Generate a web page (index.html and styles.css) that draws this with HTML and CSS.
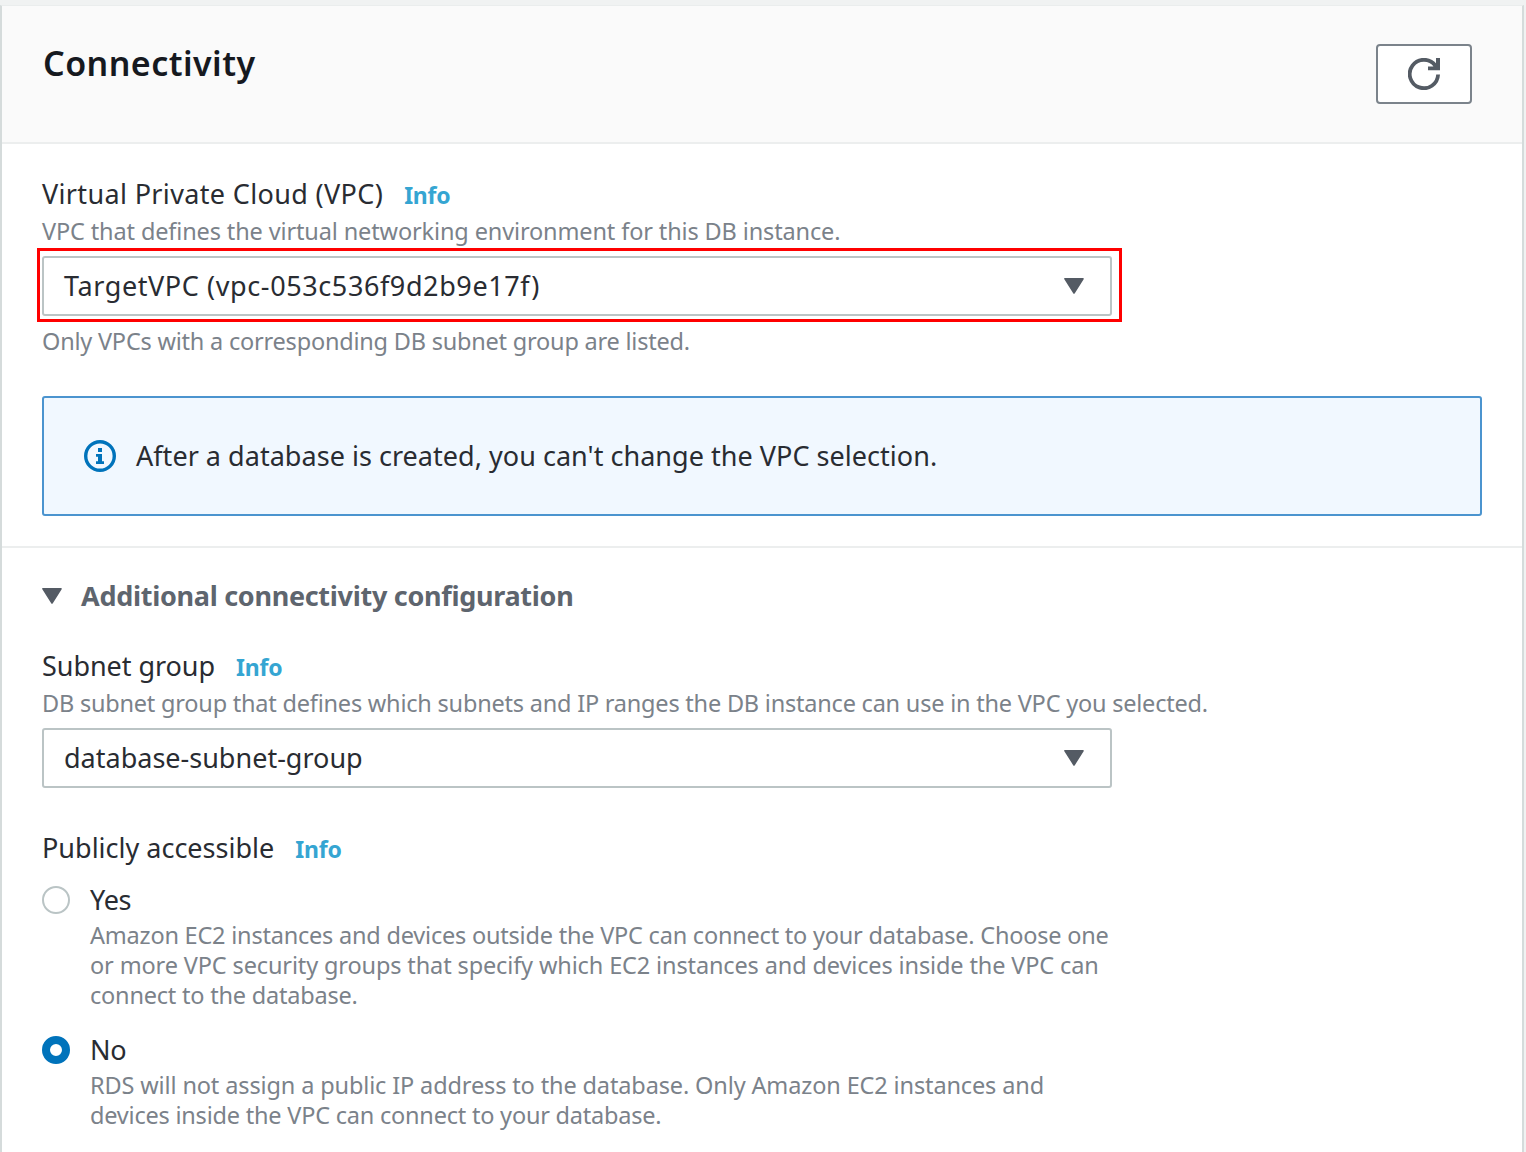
FILE: index.html
```html
<!DOCTYPE html>
<html lang="en">
<head>
<meta charset="utf-8">
<title>Connectivity</title>
<link rel="stylesheet" href="styles.css">
</head>
<body>
<main class="panel">
  <header class="panel-header">
    <h1 class="title">Connectivity</h1>
    <button class="refresh" type="button" aria-label="Refresh">
      <svg width="32" height="32" viewBox="0 0 32 32"><path d="M30.100 16.500A14.200 14.200 0 1 1 27.300 7.500" fill="none" stroke="#545b64" stroke-width="3.800"/><path d="M28 0h4v12.300H20V8.500h5l3-2z" fill="#545b64"/></svg>
    </button>
  </header>

  <section class="section">
    <div class="label label-vpc">Virtual Private Cloud (VPC)<a class="info">Info</a></div>
    <p class="hint hint-loose">VPC that defines the virtual networking environment for this DB instance.</p>
    <div class="select select-highlighted">
      <span class="value-vpc">TargetVPC (vpc-053c536f9d2b9e17f)</span>
      <svg class="caret" width="20" height="16" viewBox="0 0 20 16"><path d="M1 .8h18L10 15z" fill="#545b64" stroke="#545b64" stroke-width="1.600" stroke-linejoin="round"/></svg>
    </div>
    <p class="hint hint-below">Only VPCs with a corresponding DB subnet group are listed.</p>
    <div class="alert">
      <svg width="32" height="32" viewBox="0 0 32 32"><circle cx="16" cy="16" r="14.300" fill="none" stroke="#0073bb" stroke-width="3.400"/><path d="M14 8h4v4h-4zM12 14h6v7.200h2V24h-8v-2.800h2v-4.400h-2z" fill="#0073bb"/></svg>
      <span>After a database is created, you can't change the VPC selection.</span>
    </div>
  </section>

  <section class="section section-additional">
    <h2 class="expander">
      <svg width="20" height="16" viewBox="0 0 20 16"><path d="M1 .8h18L10 15z" fill="#545b64" stroke="#545b64" stroke-width="1.600" stroke-linejoin="round"/></svg>
      <span>Additional connectivity configuration</span>
    </h2>

    <div class="label label-subnet">Subnet group<a class="info">Info</a></div>
    <p class="hint">DB subnet group that defines which subnets and IP ranges the DB instance can use in the VPC you selected.</p>
    <div class="select">
      <span>database-subnet-group</span>
      <svg class="caret" width="20" height="16" viewBox="0 0 20 16"><path d="M1 .8h18L10 15z" fill="#545b64" stroke="#545b64" stroke-width="1.600" stroke-linejoin="round"/></svg>
    </div>

    <div class="label label-public">Publicly accessible<a class="info">Info</a></div>
    <div class="option">
      <span class="radio"></span>
      <div class="option-text">
        <div class="option-name">Yes</div>
        <p class="hint">Amazon EC2 instances and devices outside the VPC can connect to your database. Choose one<br><span class="hint-loose">or more VPC security groups that specify which EC2 instances and devices inside the VPC can</span><br>connect to the database.</p>
      </div>
    </div>
    <div class="option">
      <span class="radio radio-checked"></span>
      <div class="option-text">
        <div class="option-name">No</div>
        <p class="hint"><span class="hint-loose">RDS will not assign a public IP address to the database. Only Amazon EC2 instances and</span><br>devices inside the VPC can connect to your database.</p>
      </div>
    </div>
  </section>
</main>
</body>
</html>
```
FILE: styles.css
```css
* { box-sizing: border-box; }

body {
  margin: 0;
  padding: 5px 2px 0 0;
  height: 1152px;
  overflow: hidden;
  background: #f0f2f2;
  font-family: "Noto Sans", sans-serif;
  font-size: 27px;
  line-height: 36px;
  color: #292c32;
}

p, h1, h2 { margin: 0; }
svg { display: block; flex: none; }

.panel {
  height: 1147px;
  background: #fff;
  border: solid #d5dbdb;
  border-width: 0 2px;
  border-top: 1px solid #eaeded;
}

.panel-header {
  display: flex;
  justify-content: space-between;
  height: 138px;
  padding: 38px 50px 0 40px;
  background: #fafafa;
  border-bottom: 2px solid #eceeee;
}

.title {
  margin-top: -1px;
  padding-left: 1px;
  font-size: 34px;
  line-height: 40px;
  font-weight: 600;
  letter-spacing: 0.45px;
  color: #16191f;
}

.refresh {
  display: flex;
  align-items: center;
  justify-content: center;
  width: 96px;
  height: 60px;
  padding: 0;
  background: #fff;
  border: 2px solid #7b838b;
  border-radius: 4px;
}

.section {
  padding: 32px 40px 30px;
  border-bottom: 2px solid #eceeee;
}

.section-additional {
  padding-top: 30px;
  border-bottom: 0;
}

.label {
  display: flex;
  align-items: baseline;
  gap: 21px;
  height: 36px;
}

.label-vpc { letter-spacing: 0.35px; }
.label-subnet { margin-top: 34px; letter-spacing: -0.05px; }
.label-public { margin-top: 42px; }

.info {
  font-size: 23px;
  font-weight: 700;
  letter-spacing: -0.2px;
  color: #35a5d2;
}

.hint {
  margin-top: 4px;
  font-size: 23.5px;
  line-height: 30px;
  letter-spacing: -0.21px;
  white-space: nowrap;
  color: #7b828a;
}

.hint-loose { letter-spacing: -0.13px; }
.hint-below { margin-top: 10px; }

.select {
  display: flex;
  align-items: center;
  justify-content: space-between;
  position: relative;
  width: 1070px;
  height: 60px;
  margin-top: 10px;
  padding: 0 26px 0 20px;
  border: 2px solid #bbc4c5;
  border-radius: 3px;
}

.select-highlighted::after {
  content: "";
  position: absolute;
  inset: -10px -12px -8px -7px;
  border: 3px solid #f00;
}

.value-vpc { letter-spacing: 0.6px; }

.alert {
  display: flex;
  align-items: center;
  gap: 20px;
  height: 120px;
  margin-top: 40px;
  padding-left: 40px;
  background: #f1f8ff;
  border: 2px solid #4b94cf;
  border-radius: 3px;
  letter-spacing: 0.03px;
}

.expander {
  display: flex;
  align-items: center;
  gap: 19px;
  font-size: 27px;
  line-height: 36px;
  font-weight: 700;
  letter-spacing: -0.29px;
  color: #5e656e;
}

.option {
  display: flex;
  gap: 20px;
  margin-top: 16px;
}

.option + .option { margin-top: 22px; }
.option .hint { margin-top: 2px; }

.radio {
  flex: none;
  width: 28px;
  height: 28px;
  margin-top: 4px;
  border: 2px solid #bac4c5;
  border-radius: 50%;
  background: #fff;
}

.radio-checked { border: 8px solid #0073bb; }
.option-name { letter-spacing: -0.3px; }
```
